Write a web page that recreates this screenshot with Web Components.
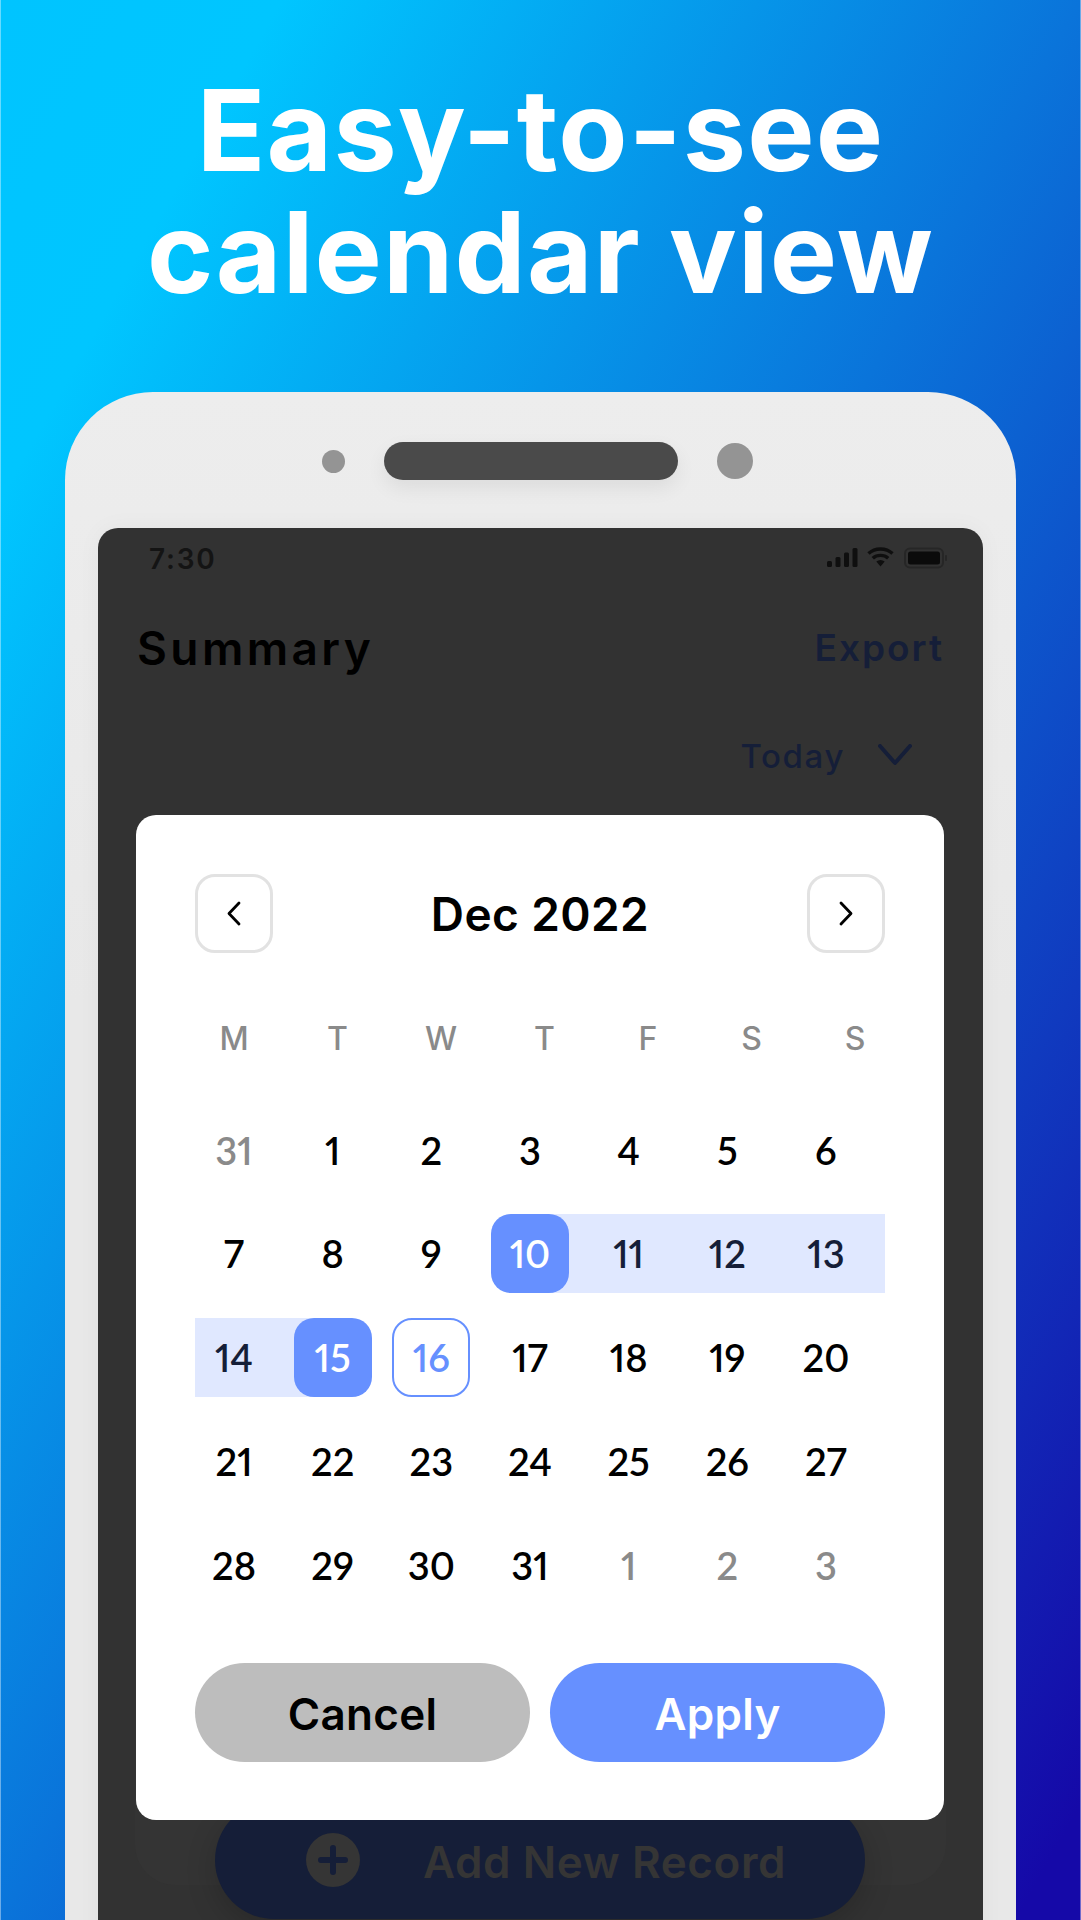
<!DOCTYPE html>
<html lang="en">
<head>
<meta charset="utf-8">
<title>Easy-to-see calendar view</title>
<style>
  html, body { margin: 0; padding: 0; }
  body { width: 1081px; height: 1920px; overflow: hidden; font-family: "Inter", "Liberation Sans", sans-serif; }
</style>
</head>
<body>
<promo-page>
  <span slot="title">Easy-to-see<br>calendar view</span>
  <phone-frame>
    <status-bar time="7:30"></status-bar>
    <summary-head></summary-head>
    <bottom-card></bottom-card>
    <calendar-modal slot="overlay"></calendar-modal>
  </phone-frame>
</promo-page>

<script>
function define(name, html, setup) {
  customElements.define(name, class extends HTMLElement {
    constructor() {
      super();
      this.attachShadow({ mode: 'open' }).innerHTML = html;
    }
    connectedCallback() { if (setup && !this._done) { this._done = true; setup(this); } }
  });
}

define('promo-page', `
<style>
  :host { display: flex; flex-direction: column; width: 1081px; height: 1920px; overflow: hidden; position: relative;
    background: linear-gradient(to bottom right, #00c4ff 0%, #00c6ff 13%, #0a74da 50%, #1509a8 97%); }
  :host::after { content: ""; position: absolute; inset: 0; box-shadow: inset 1px 0 rgba(255,255,255,.4), inset -1px 0 rgba(255,255,255,.4); pointer-events: none; }
  h1 { margin: 0; height: 392px; box-sizing: border-box; padding-top: 69px; text-align: center; color: #fff;
    font: 700 113px/122px "Inter", "Liberation Sans", sans-serif; letter-spacing: 1.2px; flex: none; }
</style>
<h1><slot name="title"></slot></h1>
<slot></slot>`);

define('phone-frame', `
<style>
  :host { display: block; flex: 1; min-height: 0; margin: 0 65px 0 65px; padding: 50px 33px 0; box-sizing: border-box;
    background: linear-gradient(#ededed, #e8e8e8 40%); border-radius: 88px 88px 0 0; }
  .top { display: flex; align-items: center; justify-content: center; height: 38px; padding-right: 6.5px; }
  .mic { width: 23px; height: 23px; border-radius: 50%; background: #949494; }
  .speaker { width: 294px; height: 38px; border-radius: 19px; background: #4a4a4a; margin: 0 39px 0 38.5px;
    box-shadow: 0 8px 20px rgba(0,0,0,.07); }
  .cam { width: 36px; height: 36px; border-radius: 50%; background: #949494; }
  .screen { position: relative; margin-top: 48px; height: 1500px; background: #323232; border-radius: 20px 20px 0 0;
    box-shadow: 0 0 24px rgba(0,0,0,.04); }
  .overlay { position: absolute; left: 37.5px; top: 287px; }
</style>
<div class="top"><div class="mic"></div><div class="speaker"></div><div class="cam"></div></div>
<div class="screen"><slot></slot><div class="overlay"><slot name="overlay"></slot></div></div>`);

define('status-bar', `
<style>
  :host { display: flex; justify-content: space-between; align-items: center; height: 60px; padding: 0 36px 0 51px; box-sizing: border-box; }
  .t { font: 600 28px/1 "Inter", sans-serif; letter-spacing: 1.8px; color: #141414; padding-top: 1px; }
  svg { display: block; }
</style>
<span class="t"></span>
<svg width="120" height="24" viewBox="0 0 120 24" aria-hidden="true">
  <g fill="#0f0f0f">
    <rect x="0" y="15" width="5" height="6" rx="1.5"/>
    <rect x="8.5" y="11" width="5" height="10" rx="1.5"/>
    <rect x="17" y="6.5" width="5" height="14.5" rx="1.5"/>
    <rect x="25.5" y="2" width="5" height="19" rx="1.5"/>
  </g>
  <g fill="none" stroke="#0f0f0f" stroke-width="3.4">
    <path d="M41.5 7.6 C48 1.4 59 1.4 65.5 7.6"/>
    <path d="M45.8 12.2 C50 8.4 57 8.4 61.2 12.2"/>
  </g>
  <path d="M49.3 15.4 C52 13.4 55 13.4 57.7 15.4 L53.5 20.6 Z" fill="#0f0f0f"/>
  <rect x="78" y="2.5" width="38" height="19" rx="5" fill="none" stroke="#262626" stroke-width="2"/>
  <rect x="81" y="5.5" width="32" height="13" rx="2.5" fill="#0b0b0b"/>
  <rect x="118" y="9" width="2" height="6" rx="1" fill="#262626"/>
</svg>`, el => {
  el.shadowRoot.querySelector('.t').textContent = el.getAttribute('time');
});

define('summary-head', `
<style>
  :host { display: block; padding: 29px 40px 0; font-family: "Inter", sans-serif; }
  .row { display: flex; justify-content: space-between; align-items: center; height: 60px; }
  .title { font-size: 46px; font-weight: 600; color: #000; letter-spacing: 3.4px; margin-left: -1px; padding-top: 2px; }
  .export { font-size: 37px; font-weight: 600; color: #151e38; letter-spacing: 2px; margin-right: -1px; }
  .today { display: flex; justify-content: flex-end; align-items: center; gap: 33px; height: 50px; margin-top: 54px; padding-right: 31px;
    font-size: 33px; font-weight: 500; color: #151e38; letter-spacing: 1.6px; }
  svg { display: block; margin-top: -2px; }
</style>
<div class="row"><span class="title">Summary</span><span class="export">Export</span></div>
<div class="today"><span>Today</span>
  <svg width="34" height="22" viewBox="0 0 34 22" aria-hidden="true"><path d="M2 2 L17 19 L32 2" fill="none" stroke="#151e38" stroke-width="4" stroke-linecap="round" stroke-linejoin="round"/></svg>
</div>`);

define('bottom-card', `
<style>
  :host { display: block; margin: 34px 37px 0; height: 1070px; position: relative; background: #343434; border-radius: 40px; }
  .add { position: absolute; left: 80px; bottom: -34px; width: 650px; height: 118px; border-radius: 59px; background: #151e38;
    box-shadow: 0 10px 30px rgba(0,0,0,.18); display: flex; align-items: center; padding-left: 91px; box-sizing: border-box; gap: 63px;
    font: 600 44px/1 "Inter", sans-serif; letter-spacing: .6px; color: #353535; }
  .plus { width: 54px; height: 54px; border-radius: 50%; background: #353535; flex: none; }
  .plus svg { display: block; }
  .label { padding-top: 3px; }
</style>
<div class="add">
  <span class="plus"><svg width="54" height="54" viewBox="0 0 54 54" aria-hidden="true"><path d="M27 15 V39 M15 27 H39" stroke="#151e38" stroke-width="6" stroke-linecap="round"/></svg></span>
  <span class="label">Add New Record</span>
</div>`);

define('nav-button', `
<style>
  :host { display: flex; align-items: center; justify-content: center; width: 78px; height: 79px; box-sizing: border-box;
    border: 3px solid #e2e2e2; border-radius: 20px; background: #fff; }
  svg { display: block; }
</style>
<svg width="16" height="25" viewBox="0 0 16 25" aria-hidden="true"><path d="" fill="none" stroke="#000" stroke-width="2.8" stroke-linecap="round" stroke-linejoin="round"/></svg>`, el => {
  el.shadowRoot.querySelector('path').setAttribute('d',
    el.getAttribute('dir') === 'next' ? 'M3 2 L13 12.5 L3 23' : 'M13 2 L3 12.5 L13 23');
});

define('cal-day', `
<style>
  :host { display: block; height: 79px; }
  :host([kind="in"]) { background: #e0e8ff; }
  :host([kind="start"]) { background: linear-gradient(to right, transparent 39px, #e0e8ff 39px); }
  :host([kind="end"]) { background: linear-gradient(to right, #e0e8ff 39px, transparent 39px); }
  .n { display: flex; align-items: center; justify-content: center; width: 78px; height: 79px; box-sizing: border-box; border-radius: 20px;
    font: 600 38px/1 "Lato", sans-serif; font-variant-numeric: proportional-nums; color: #000; }
  :host([kind="in"]) .n { color: #151e38; }
  :host([kind="start"]) .n, :host([kind="end"]) .n { background: #6690ff; color: #fff; }
  :host([kind="today"]) .n { border: 2.5px solid #6690ff; color: #6690ff; }
  :host([muted]) .n { color: #8a8a8a; }
</style>
<div class="n"><slot></slot></div>`);

define('pill-button', `
<style>
  :host { display: flex; align-items: center; justify-content: center; height: 99px; box-sizing: border-box; padding-top: 2px; border-radius: 50px; flex: 1;
    font: 600 44px/1 "Inter", sans-serif; letter-spacing: .3px; background: #bdbdbd; color: #000; }
  :host([primary]) { background: #6690ff; color: #fff; }
</style>
<slot></slot>`);

define('calendar-modal', `
<style>
  :host { display: block; width: 808.5px; height: 1005px; box-sizing: border-box; padding: 59px 59px 0 59.5px; background: #fff; border-radius: 20px; font-family: "Inter", sans-serif; }
  .head { display: flex; justify-content: space-between; align-items: center; height: 79px; }
  .month { font-size: 46px; font-weight: 600; color: #000; letter-spacing: .4px; }
  .week { display: grid; grid-template-columns: repeat(7, 103.5px); margin: 66px 0 0 -12.75px; text-align: center; height: 40px;
    font-size: 32px; line-height: 40px; font-weight: 500; color: #8a8a8a; }
  .days { display: grid; grid-template-columns: repeat(6, 98.67px) 98px; grid-auto-rows: 79px; row-gap: 24.75px; margin-top: 51px; }
  .actions { display: flex; gap: 20px; margin-top: 59px; }
</style>
<div class="head">
  <nav-button dir="prev"></nav-button>
  <span class="month">Dec 2022</span>
  <nav-button dir="next"></nav-button>
</div>
<div class="week"><span>M</span><span>T</span><span>W</span><span>T</span><span>F</span><span>S</span><span>S</span></div>
<div class="days"></div>
<div class="actions"><pill-button>Cancel</pill-button><pill-button primary>Apply</pill-button></div>`, el => {
  const days = el.shadowRoot.querySelector('.days');
  const list = [[31,1],1,2,3,4,5,6,7,8,9,10,11,12,13,14,15,16,17,18,19,20,21,22,23,24,25,26,27,28,29,30,31,[1,1],[2,1],[3,1]];
  const kinds = { 10:'start', 11:'in', 12:'in', 13:'in', 14:'in', 15:'end', 16:'today' };
  list.forEach(item => {
    const d = document.createElement('cal-day');
    const muted = Array.isArray(item);
    const n = muted ? item[0] : item;
    d.textContent = n;
    if (muted) d.setAttribute('muted', '');
    else if (kinds[n]) d.setAttribute('kind', kinds[n]);
    days.appendChild(d);
  });
});
</script>
</body>
</html>
